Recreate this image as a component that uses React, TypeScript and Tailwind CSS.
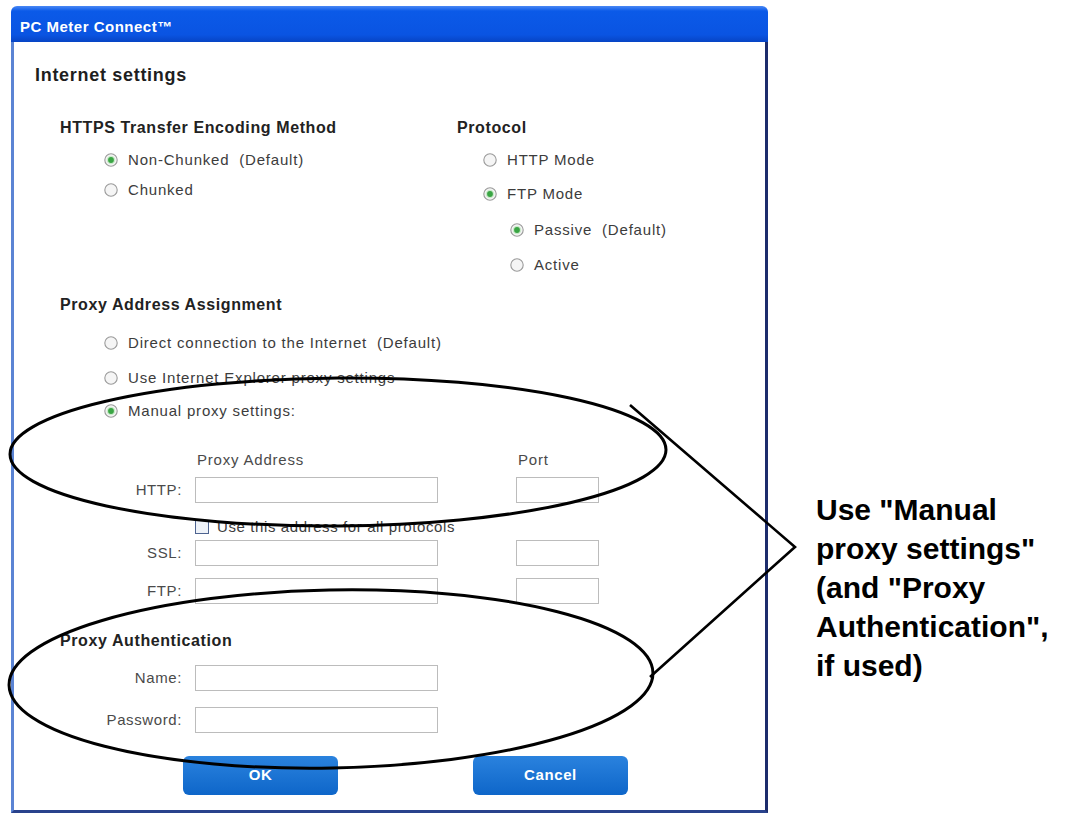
import type { ReactNode } from "react";

function Radio({ checked = false, label, className = "" }: { checked?: boolean; label: string; className?: string }) {
  return (
    <div className={`flex h-[24px] items-center gap-[10px] ${className}`}>
      <svg width="14" height="14" viewBox="0 0 14 14" className="shrink-0">
        <circle cx="7" cy="7" r="6.2" fill="#f5f5f5" stroke="#9a9a9a" strokeWidth="1.1" />
        {checked && <circle cx="7" cy="7" r="4.3" fill="#cbeacb" />}
        {checked && <circle cx="7" cy="7" r="2.9" fill="#3aa544" />}
      </svg>
      <span className="whitespace-pre text-[15px] leading-[24px] tracking-[0.8px] text-[#3c3c3c]">{label}</span>
    </div>
  );
}

function Heading({ children, className = "" }: { children: ReactNode; className?: string }) {
  return (
    <div className={`text-[16px] font-bold leading-[20px] tracking-[0.6px] text-[#222] ${className}`}>{children}</div>
  );
}

function FieldRow({ label, port = true, className = "" }: { label: string; port?: boolean; className?: string }) {
  return (
    <div className={`flex items-center ${className}`}>
      <span className="w-[122px] text-right text-[15px] tracking-[0.6px] text-[#4a4a4a]">{label}</span>
      <div className="ml-[13px] h-[26px] w-[243px] border border-[#bcbcbc] bg-white" />
      {port && <div className="ml-[78px] h-[26px] w-[83px] border border-[#bcbcbc] bg-white" />}
    </div>
  );
}

function DialogButton({ label, className = "" }: { label: string; className?: string }) {
  return (
    <button
      type="button"
      className={`h-[39px] w-[155px] rounded-[6px] bg-[linear-gradient(to_bottom,#2a82de,#0e66c9)] text-[15px] font-bold tracking-[0.6px] text-white ${className}`}
    >
      {label}
    </button>
  );
}

export default function App() {
  return (
    <div className="relative flex h-[817px] w-[1065px] overflow-hidden bg-white font-['Liberation_Sans',Arial,sans-serif]">
      {/* dialog */}
      <div className="ml-[11px] mt-[6px] flex h-[807px] w-[757px] flex-col">
        <div className="h-[36px] rounded-t-[6px] bg-[linear-gradient(to_bottom,#4a88f5_0%,#0b5ae8_14%,#0a54e2_80%,#0744c4_100%)] pl-[9px] pt-[11px] text-[15px] font-bold leading-[20px] tracking-[0.5px] text-white">
          PC Meter Connect™
        </div>
        <div className="flex h-[771px] flex-col border-x-[3px] border-b-[3px] border-l-[#5b84d4] border-r-[#1c2c6c] border-b-[#29428c] bg-white">
          <div className="pl-[21px] pt-[21px] text-[18px] font-bold leading-[24px] tracking-[0.7px] text-[#1e1e1e]">
            Internet settings
          </div>

          <div className="ml-[46px] flex flex-col">
            <div className="mt-[31px] flex">
              <div className="w-[397px]">
                <Heading>HTTPS Transfer Encoding Method</Heading>
                <div className="pl-[44px]">
                  <Radio checked label="Non-Chunked  (Default)" className="mt-[10px]" />
                  <Radio label="Chunked" className="mt-[6px]" />
                </div>
              </div>
              <div>
                <Heading>Protocol</Heading>
                <div className="pl-[26px]">
                  <Radio label="HTTP Mode" className="mt-[10px]" />
                  <Radio checked label="FTP Mode" className="mt-[10px]" />
                  <div className="pl-[27px]">
                    <Radio checked label="Passive  (Default)" className="mt-[12px]" />
                    <Radio label="Active" className="mt-[11px]" />
                  </div>
                </div>
              </div>
            </div>

            <Heading className="mt-[18px]">Proxy Address Assignment</Heading>
            <div className="pl-[44px]">
              <Radio label="Direct connection to the Internet  (Default)" className="mt-[16px]" />
              <Radio label="Use Internet Explorer proxy settings" className="mt-[11px]" />
              <Radio checked label="Manual proxy settings:" className="mt-[9px]" />
            </div>

            <div className="mt-[27px] flex text-[15px] leading-[20px] tracking-[0.8px] text-[#4a4a4a]">
              <span className="ml-[137px] w-[321px]">Proxy Address</span>
              <span>Port</span>
            </div>
            <FieldRow label="HTTP:" className="mt-[7px]" />
            <div className="ml-[135px] mt-[14px] flex h-[20px] items-center gap-[8px]">
              <div className="h-[14px] w-[14px] border border-[#4d6390] bg-[#eef2f8]" />
              <span className="text-[15px] tracking-[0.6px] text-[#3c3c3c]">Use this address for all protocols</span>
            </div>
            <FieldRow label="SSL:" className="mt-[3px]" />
            <FieldRow label="FTP:" className="mt-[12px]" />

            <Heading className="mt-[27px]">Proxy Authentication</Heading>
            <FieldRow label="Name:" port={false} className="mt-[14px]" />
            <FieldRow label="Password:" port={false} className="mt-[16px]" />

            <div className="ml-[123px] mt-[23px] flex">
              <DialogButton label="OK" />
              <DialogButton label="Cancel" className="ml-[135px]" />
            </div>
          </div>
        </div>
      </div>

      {/* callout text */}
      <div className="ml-[48px] mt-[490px] whitespace-nowrap text-[30px] font-bold leading-[39px] text-black">
        Use &quot;Manual
        <br />
        proxy settings&quot;
        <br />
        (and &quot;Proxy
        <br />
        Authentication&quot;,
        <br />
        if used)
      </div>

      {/* hand-drawn annotation marks */}
      <svg className="pointer-events-none absolute inset-0" width="1065" height="817" viewBox="0 0 1065 817">
        <g fill="none" stroke="#000" strokeWidth="3" strokeLinejoin="miter">
          <ellipse cx="338" cy="452" rx="328" ry="74" transform="rotate(-0.4 338 452)" />
          <ellipse cx="331" cy="679" rx="322" ry="89" transform="rotate(-1.1 331 679)" />
        </g>
        <polyline points="630,405 795,547 650,677" fill="none" stroke="#000" strokeWidth="2.6" />
      </svg>
    </div>
  );
}
